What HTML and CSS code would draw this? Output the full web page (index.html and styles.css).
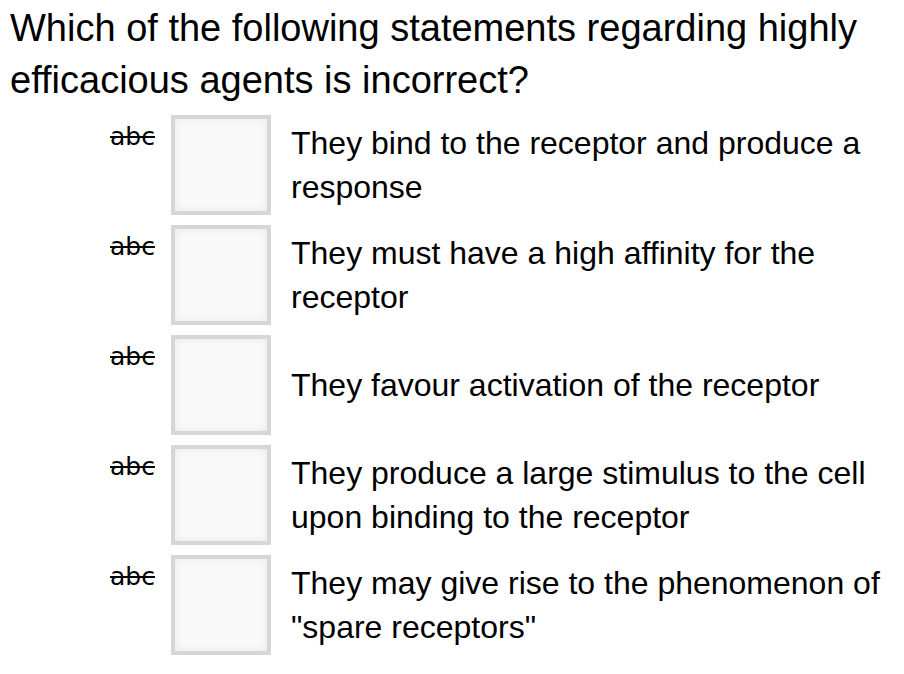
FILE: index.html
```html
<!DOCTYPE html>
<html>
<head>
<meta charset="utf-8">
<link rel="stylesheet" href="styles.css">
</head>
<body>
<div class="page">
  <h1 class="question">Which of the following statements regarding highly efficacious agents is incorrect?</h1>
  <div class="options">
    <div class="option">
      <span class="abc">abc</span>
      <div class="box"></div>
      <div class="text">They bind to the receptor and produce a response</div>
    </div>
    <div class="option">
      <span class="abc">abc</span>
      <div class="box"></div>
      <div class="text">They must have a high affinity for the receptor</div>
    </div>
    <div class="option">
      <span class="abc">abc</span>
      <div class="box"></div>
      <div class="text">They favour activation of the receptor</div>
    </div>
    <div class="option">
      <span class="abc">abc</span>
      <div class="box"></div>
      <div class="text">They produce a large stimulus to the cell upon binding to the receptor</div>
    </div>
    <div class="option">
      <span class="abc">abc</span>
      <div class="box"></div>
      <div class="text">They may give rise to the phenomenon of "spare receptors"</div>
    </div>
  </div>
</div>
</body>
</html>
```

FILE: styles.css
```css
html, body {
  margin: 0;
  padding: 0;
  background: #ffffff;
}
body {
  font-family: "Liberation Sans", Arial, sans-serif;
  color: #000;
}
.page {
  padding: 2px 0 0 10px;
}
.question {
  margin: 0;
  font-size: 38px;
  font-weight: normal;
  line-height: 52px;
  width: 880px;
}
.options {
  display: flex;
  flex-direction: column;
  gap: 10px;
  margin-top: 9px;
  padding-left: 100px;
}
.option {
  display: flex;
  align-items: center;
  height: 100px;
}
.abc {
  align-self: flex-start;
  width: 61px;
  font-family: "DejaVu Sans", sans-serif;
  font-size: 25px;
  line-height: 24px;
  margin-top: 10px;
  text-decoration: line-through;
}
.box {
  box-sizing: border-box;
  width: 100px;
  height: 100px;
  flex: none;
  border: 4px solid #d6d6d6;
  background: #f9f9f9;
  box-shadow: inset 0 0 8px rgba(0,0,0,0.07);
}
.text {
  margin-left: 20px;
  font-size: 32px;
  line-height: 44px;
  width: 600px;
}
```
